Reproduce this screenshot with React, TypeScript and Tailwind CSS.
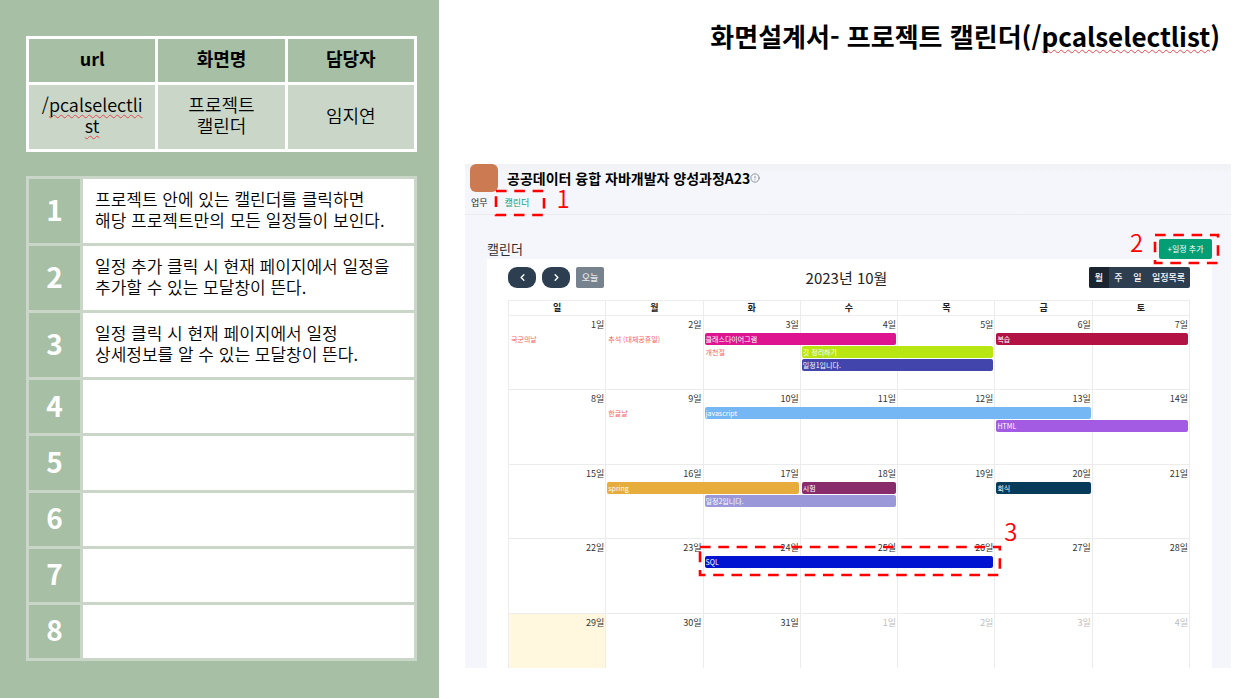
import { ChevronLeft, ChevronRight, CircleAlert } from "lucide-react";
import type { ReactNode } from "react";

type CalEvent = { title: string; span: number; tone: string; callout?: string };
type Day = { label: string; outside?: boolean; today?: boolean; slots?: (CalEvent | null)[] };

const notes = [
  ["프로젝트 안에 있는 캘린더를 클릭하면", "해당 프로젝트만의 모든 일정들이 보인다."],
  ["일정 추가 클릭 시 현재 페이지에서 일정을", "추가할 수 있는 모달창이 뜬다."],
  ["일정 클릭 시 현재 페이지에서 일정", "상세정보를 알 수 있는 모달창이 뜬다."],
  [],
  [],
  [],
  [],
  [],
];

const holiday = "text-[#f8605f]";

const weeks: { height: string; days: Day[] }[] = [
  {
    height: "h-[74px]",
    days: [
      { label: "1일", slots: [{ title: "국군의날", span: 1, tone: holiday }] },
      { label: "2일", slots: [{ title: "추석 (대체공휴일)", span: 1, tone: holiday }] },
      {
        label: "3일",
        slots: [
          { title: "클래스다이어그램", span: 2, tone: "bg-[#dd138f] text-white" },
          { title: "개천절", span: 1, tone: holiday },
        ],
      },
      {
        label: "4일",
        slots: [
          null,
          { title: "깃 정리하기", span: 2, tone: "bg-[#b7e613] text-white" },
          { title: "일정1입니다.", span: 2, tone: "bg-[#4145ac] text-white" },
        ],
      },
      { label: "5일" },
      { label: "6일", slots: [{ title: "복습", span: 2, tone: "bg-[#b31244] text-white" }] },
      { label: "7일" },
    ],
  },
  {
    height: "h-[75px]",
    days: [
      { label: "8일" },
      { label: "9일", slots: [{ title: "한글날", span: 1, tone: holiday }] },
      { label: "10일", slots: [{ title: "javascript", span: 4, tone: "bg-[#74b7f4] text-white" }] },
      { label: "11일" },
      { label: "12일" },
      { label: "13일", slots: [null, { title: "HTML", span: 2, tone: "bg-[#a45be3] text-white" }] },
      { label: "14일" },
    ],
  },
  {
    height: "h-[74px]",
    days: [
      { label: "15일" },
      { label: "16일", slots: [{ title: "spring", span: 2, tone: "bg-[#e6ad3c] text-white" }] },
      { label: "17일", slots: [null, { title: "일정2입니다.", span: 2, tone: "bg-[#9b98d9] text-white" }] },
      { label: "18일", slots: [{ title: "시험", span: 1, tone: "bg-[#892c6c] text-white" }] },
      { label: "19일" },
      { label: "20일", slots: [{ title: "회식", span: 1, tone: "bg-[#073b5a] text-white" }] },
      { label: "21일" },
    ],
  },
  {
    height: "h-[75px]",
    days: [
      { label: "22일" },
      { label: "23일" },
      { label: "24일", slots: [{ title: "SQL", span: 3, tone: "bg-[#0013d1] text-white", callout: "3" }] },
      { label: "25일" },
      { label: "26일" },
      { label: "27일" },
      { label: "28일" },
    ],
  },
  {
    height: "h-[54px]",
    days: [
      { label: "29일", today: true },
      { label: "30일" },
      { label: "31일" },
      { label: "1일", outside: true },
      { label: "2일", outside: true },
      { label: "3일", outside: true },
      { label: "4일", outside: true },
    ],
  },
];

function Misspelled({ children }: { children: ReactNode }) {
  return (
    <span className="underline decoration-[#e8474c] decoration-wavy decoration-1 underline-offset-2 [text-decoration-skip-ink:none]">
      {children}
    </span>
  );
}

function Callout({ number, box, label }: { number: string; box: string; label: string }) {
  return (
    <span className={`pointer-events-none absolute z-20 ${box}`}>
      <svg className="block h-full w-full overflow-visible" aria-hidden="true">
        <rect width="100%" height="100%" fill="none" stroke="#ff0000" strokeWidth="2.6" strokeDasharray="10.6 7.7" />
      </svg>
      <span className={`absolute text-2xl leading-6 font-[350] text-[#ff0000] ${label}`}>{number}</span>
    </span>
  );
}

function EventSlot({ event }: { event: CalEvent | null }) {
  if (!event) return <div className="h-[13px]" />;
  return (
    <div
      className="relative z-10 mb-px ml-px h-3"
      style={{ width: `calc(${event.span * 100}% + ${event.span - 3}px)` }}
    >
      <div className={`h-3 overflow-hidden rounded-[2px] pl-px text-[7px] leading-3 whitespace-nowrap ${event.tone}`}>
        {event.title}
      </div>
      {event.callout && (
        <Callout number={event.callout} box="-top-[9px] -right-[6px] -left-[5px] h-7" label="-top-7 -right-[18px]" />
      )}
    </div>
  );
}

export default function App() {
  return (
    <div
      lang="ko"
      className="grid min-h-screen grid-cols-[439fr_806fr] bg-white font-['Noto_Sans_CJK_KR','Noto_Sans',sans-serif] text-black"
    >
      <aside className="bg-[#a7bfa5] pt-9 pr-[22px] pl-[26px] leading-[21px]">
        <table className="w-full table-fixed border-collapse text-center text-lg leading-[21px]">
          <thead>
            <tr className="h-[46px]">
              {["url", "화면명", "담당자"].map((h) => (
                <th key={h} scope="col" className="border-[3px] border-white pb-1 font-bold">
                  {h}
                </th>
              ))}
            </tr>
          </thead>
          <tbody>
            <tr className="h-[67px] bg-[#cad7c8] font-[350]">
              <td className="border-[3px] border-white px-3 pb-1 break-all">
                /<Misspelled>pcalselectlist</Misspelled>
              </td>
              <td className="border-[3px] border-white px-6 pb-1 break-keep">프로젝트 캘린더</td>
              <td className="border-[3px] border-white pb-1">임지연</td>
            </tr>
          </tbody>
        </table>

        <table className="mt-6 h-[485px] w-full table-fixed border-collapse text-[17px] leading-[21px]">
          <colgroup>
            <col className="w-[54px]" />
            <col />
          </colgroup>
          <tbody>
            {notes.map((lines, i) => (
              <tr key={i} className={lines.length ? "h-[67px]" : "h-[56px]"}>
                <th
                  scope="row"
                  className="border-[3px] border-[#cad7c8] pb-1 text-[28px] leading-8 font-bold text-white"
                >
                  {i + 1}
                </th>
                <td className="border-[3px] border-[#cad7c8] bg-white pb-1 pl-3 font-[350] whitespace-nowrap">
                  {lines.map((line) => (
                    <div key={line}>{line}</div>
                  ))}
                </td>
              </tr>
            ))}
          </tbody>
        </table>
      </aside>

      <main className="flex flex-col pr-[14px] pl-[26px]">
        <h1 className="pt-[18px] pr-[11px] text-right text-[26px] leading-9 font-bold whitespace-nowrap">
          화면설계서- 프로젝트 캘린더(/<Misspelled>pcalselectlist</Misspelled>)
        </h1>

        <section className="mt-[110px] bg-[#f5f6fb]">
          <header className="border-b border-[#e9ebef] bg-linear-to-b from-[#eff1f4] to-[#f5f6fb] to-20%">
            <div className="flex h-7 items-center pl-[5px]">
              <span className="size-7 rounded-md bg-[#cc7a51]" />
              <h2 className="ml-[9px] text-[14px] leading-5 font-bold">공공데이터 융합 자바개발자 양성과정A23</h2>
              <CircleAlert className="size-[10px] text-[#7d838b]" />
            </div>
            <nav className="flex h-[22px] items-center gap-[17px] pl-[6px] text-[9px]">
              <a href="#task" className="text-[#222]">
                업무
              </a>
              <a href="#calendar" className="relative text-[#0da27c]">
                캘린더
                <Callout number="1" box="-top-[5px] -left-[9px] h-6 w-12" label="-top-[5px] -right-[26px]" />
              </a>
            </nav>
          </header>

          <div className="mr-[19px] ml-[22px]">
            <div className="flex h-11 items-end justify-between">
              <h3 className="text-[13px] leading-5 text-[#2b2f33]">캘린더</h3>
              <button
                type="button"
                className="relative h-5 w-[53px] rounded-[2px] bg-[#049e74] text-[8px] leading-5 text-white"
              >
                +일정 추가
                <Callout number="2" box="-top-1 -right-[6px] -left-1 h-7" label="-top-[5px] -left-[25px]" />
              </button>
            </div>

            <div className="bg-white pt-2 pr-[22px] pl-[21px]">
              <div className="flex items-center justify-between">
                <div className="flex gap-[6px]">
                  <button
                    type="button"
                    aria-label="이전 달"
                    className="flex h-[21px] w-7 items-center justify-center rounded-[9px] bg-[#2c3e50] text-white"
                  >
                    <ChevronLeft className="size-[11px]" strokeWidth={3} />
                  </button>
                  <button
                    type="button"
                    aria-label="다음 달"
                    className="flex h-[21px] w-7 items-center justify-center rounded-[9px] bg-[#2c3e50] text-white"
                  >
                    <ChevronRight className="size-[11px]" strokeWidth={3} />
                  </button>
                  <button
                    type="button"
                    className="h-[21px] w-7 rounded-[2px] bg-[#76828e] text-[9px] font-medium text-[#e4e7ea]"
                  >
                    오늘
                  </button>
                </div>
                <h4 className="text-center text-[15px] leading-5 text-[#222]">2023년 10월</h4>
                <div className="flex h-[21px] overflow-hidden rounded-[2px] bg-[#2c3e50] text-[9px] font-medium text-white">
                  <button type="button" className="w-5 bg-[#1a252f]">
                    월
                  </button>
                  <button type="button" className="w-[19px]">
                    주
                  </button>
                  <button type="button" className="w-[19px]">
                    일
                  </button>
                  <button type="button" className="w-[43px]">
                    일정목록
                  </button>
                </div>
              </div>

              <table className="mt-3 w-full table-fixed border-collapse border-x border-t border-[#ececec]">
                <thead>
                  <tr className="h-[15px]">
                    {["일", "월", "화", "수", "목", "금", "토"].map((d) => (
                      <th
                        key={d}
                        scope="col"
                        className="border border-[#ececec] p-0 text-[9px] leading-[14px] font-bold text-[#222]"
                      >
                        {d}
                      </th>
                    ))}
                  </tr>
                </thead>
                <tbody>
                  {weeks.map((week, w) => (
                    <tr key={w} className={week.height}>
                      {week.days.map((day) => (
                        <td
                          key={day.label}
                          className={`border-x border-t border-[#ececec] p-0 align-top ${day.today ? "bg-[#fff8df]" : ""}`}
                        >
                          <div
                            className={`h-[17px] pr-px text-right text-[9px] leading-[18px] ${day.outside ? "text-[#bdbdbd]" : "text-[#333]"}`}
                          >
                            {day.label}
                          </div>
                          {day.slots?.map((event, s) => (
                            <EventSlot key={s} event={event} />
                          ))}
                        </td>
                      ))}
                    </tr>
                  ))}
                </tbody>
              </table>
            </div>
          </div>
        </section>
      </main>
    </div>
  );
}
